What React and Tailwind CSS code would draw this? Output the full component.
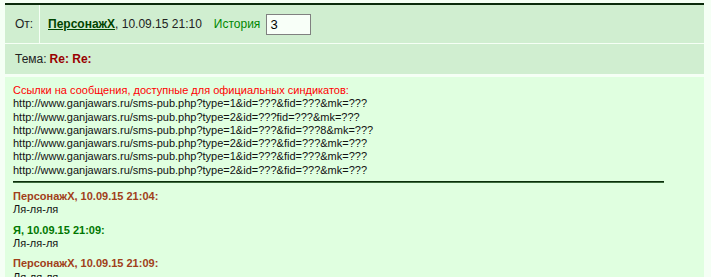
const LINKS = [
  'http://www.ganjawars.ru/sms-pub.php?type=1&id=???&fid=???&mk=???',
  'http://www.ganjawars.ru/sms-pub.php?type=2&id=???fid=???&mk=???',
  'http://www.ganjawars.ru/sms-pub.php?type=1&id=???&fid=???8&mk=???',
  'http://www.ganjawars.ru/sms-pub.php?type=2&id=???&fid=???&mk=???',
  'http://www.ganjawars.ru/sms-pub.php?type=1&id=???&fid=???&mk=???',
  'http://www.ganjawars.ru/sms-pub.php?type=2&id=???&fid=???&mk=???',
]

const MESSAGES = [
  { who: 'ПерсонажX', at: '10.09.15 21:04', mine: false, text: 'Ля-ля-ля' },
  { who: 'Я', at: '10.09.15 21:09', mine: true, text: 'Ля-ля-ля' },
  { who: 'ПерсонажX', at: '10.09.15 21:09', mine: false, text: 'Ля-ля-ля' },
]

export default function App() {
  return (
    <div className="w-[711px] h-[277px] overflow-hidden bg-[#f5fff5] pt-[3px] font-['Liberation_Sans',Arial,sans-serif] text-black">
      <div className="ml-[5px] w-[699px] h-[2px] bg-[#0a2a0a]" />

      {/* header rows */}
      <div className="ml-[5px] w-[699px] flex flex-col gap-px">
        <div className="flex gap-px h-[38px] text-[12px]">
          <div className="w-[34px] bg-[#d0eed0] flex items-center pl-[10px] text-[#222]">От:</div>
          <div className="flex-1 bg-[#d0eed0] flex items-center pl-[8px]">
            <a className="font-bold text-[#004400] underline">ПерсонажX</a>
            <span className="text-[#222]">, 10.09.15 21:10</span>
            <span className="ml-[12px] text-[#008800]">История</span>
            <input
              readOnly
              value="3"
              className="ml-[6px] w-[45px] h-[21px] border border-[#808080] bg-[#f8fff8] px-[3px] text-[13px] text-black outline-none"
            />
          </div>
        </div>
        <div className="h-[30px] bg-[#d0eed0] flex items-center pl-[10px] text-[12px] text-[#222]">
          Тема:<b className="ml-[3px] text-[#990000]">Re: Re:</b>
        </div>
      </div>

      {/* message body */}
      <div className="ml-[5px] mt-[3px] w-[699px] h-[300px] bg-[#e0ffe0] pl-[8px] pt-[7px] text-[11px] leading-[13.3px]">
        <div className="text-[#ff0000]">Ссылки на сообщения, доступные для официальных синдикатов:</div>
        {LINKS.map((l, i) => (
          <div key={i} className="text-[#111]">{l}</div>
        ))}
        <div className="mt-[4px] w-[651px] h-[2px] bg-[#0c2e0c] border-b border-[#3d6a3d]" />
        <div className="mt-[7px] flex flex-col gap-[7px]">
          {MESSAGES.map((m, i) => (
            <div key={i}>
              <div className={m.mine ? 'font-bold text-[#007700]' : 'font-bold text-[#a0401a]'}>
                {m.who}, {m.at}:
              </div>
              <div className="text-[#111]">{m.text}</div>
            </div>
          ))}
        </div>
      </div>
    </div>
  )
}
